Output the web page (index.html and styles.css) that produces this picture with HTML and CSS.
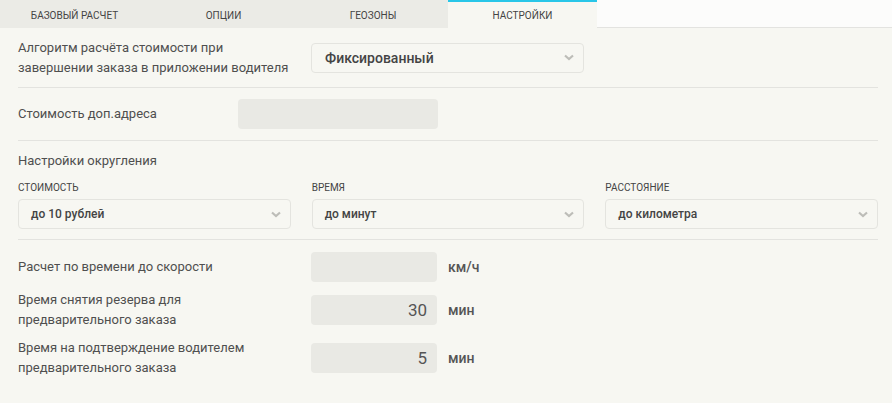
FILE: index.html
```html
<!DOCTYPE html>
<html lang="ru">
<head>
    <meta charset="UTF-8">
    <title>Настройки тарифа</title>
    <link rel="stylesheet" href="styles.css">
</head>
<body>
    <div class="tabs">
        <div class="tab">Базовый расчет</div>
        <div class="tab">Опции</div>
        <div class="tab">Геозоны</div>
        <div class="tab active">Настройки</div>
        <div class="tab-rest"></div>
    </div>

    <div class="content">
        <div class="row row-first">
            <label class="label label-wide">Алгоритм расчёта стоимости при<br>завершении заказа в приложении водителя</label>
            <div class="select select-main">
                <span>Фиксированный</span>
                <svg class="chevron" width="10" height="7" viewBox="0 0 10 7"><path d="M1 1.5 L5 5 L9 1.5" fill="none" stroke="#bdbdb8" stroke-width="2.2"/></svg>
            </div>
        </div>

        <div class="row row-second">
            <label class="label label-short">Стоимость доп.адреса</label>
            <div class="input input-addr"></div>
        </div>

        <div class="rounding">
            <div class="section-title">Настройки округления</div>
            <div class="rounding-grid">
                <div class="rounding-col">
                    <div class="small-label">Стоимость</div>
                    <div class="select">
                        <span>до 10 рублей</span>
                        <svg class="chevron" width="10" height="7" viewBox="0 0 10 7"><path d="M1 1.5 L5 5 L9 1.5" fill="none" stroke="#bdbdb8" stroke-width="2.2"/></svg>
                    </div>
                </div>
                <div class="rounding-col">
                    <div class="small-label">Время</div>
                    <div class="select">
                        <span>до минут</span>
                        <svg class="chevron" width="10" height="7" viewBox="0 0 10 7"><path d="M1 1.5 L5 5 L9 1.5" fill="none" stroke="#bdbdb8" stroke-width="2.2"/></svg>
                    </div>
                </div>
                <div class="rounding-col">
                    <div class="small-label">Расстояние</div>
                    <div class="select">
                        <span>до километра</span>
                        <svg class="chevron" width="10" height="7" viewBox="0 0 10 7"><path d="M1 1.5 L5 5 L9 1.5" fill="none" stroke="#bdbdb8" stroke-width="2.2"/></svg>
                    </div>
                </div>
            </div>
        </div>

        <div class="units">
            <div class="unit-row">
                <label class="label label-mid">Расчет по времени до скорости</label>
                <div class="input input-num"></div>
                <span class="unit">км/ч</span>
            </div>
            <div class="unit-row">
                <label class="label label-mid">Время снятия резерва для<br>предварительного заказа</label>
                <div class="input input-num">30</div>
                <span class="unit">мин</span>
            </div>
            <div class="unit-row">
                <label class="label label-mid">Время на подтверждение водителем<br>предварительного заказа</label>
                <div class="input input-num">5</div>
                <span class="unit">мин</span>
            </div>
        </div>
    </div>
</body>
</html>
```

FILE: styles.css
```css
* {
    margin: 0;
    padding: 0;
    box-sizing: border-box;
}

body {
    background-color: #f7f7f2;
    color: #4f4f4f;
    font-family: Roboto, 'Liberation Sans', sans-serif;
    font-size: 13px;
}

.tabs {
    display: flex;
    height: 28px;
}

.tab {
    width: 149px;
    background-color: #ebebe6;
    color: #444;
    font-size: 10px;
    text-transform: uppercase;
    text-align: center;
    line-height: 31px;
}

.tab:nth-child(3) {
    width: 150px;
}

.tab.active {
    background-color: #f7f7f2;
    border-top: 2px solid #29c6e8;
    line-height: 27px;
}

.tab-rest {
    flex: 1;
    background-color: #fcfcfb;
    border-bottom: 1px solid #e3e3e0;
}

.content {
    padding: 0 14px 0 18px;
}

.row {
    display: flex;
    align-items: center;
    border-bottom: 1px solid #e3e3df;
}

.row-first {
    height: 60px;
}

.row-second {
    height: 53px;
}

.label {
    line-height: 20px;
    color: #4f4f4f;
}

.label-wide {
    width: 293px;
}

.label-short {
    width: 220px;
}

.label-mid {
    width: 293px;
}

.select {
    display: flex;
    align-items: center;
    justify-content: space-between;
    height: 30px;
    border: 1px solid #e4e4df;
    border-radius: 4px;
    padding: 0 9px 0 12px;
    font-size: 12px;
    font-weight: 500;
    color: #444;
    background-color: #f7f7f2;
}

.select-main {
    width: 273px;
    font-size: 14px;
    padding-left: 13px;
}

.chevron {
    display: block;
}

.input {
    height: 30px;
    background-color: #e9e9e4;
    border-radius: 4px;
}

.input-addr {
    width: 200px;
}

.rounding {
    padding: 10px 0 10px;
    border-bottom: 1px solid #e3e3df;
}

.section-title {
    line-height: 20px;
    color: #4f4f4f;
}

.rounding-grid {
    display: grid;
    grid-template-columns: 1fr 1fr 1fr;
    gap: 21px;
    margin-top: 11px;
}

.small-label {
    font-size: 10px;
    text-transform: uppercase;
    color: #444;
    line-height: 12px;
    margin-bottom: 5px;
}

.units {
    padding-top: 12px;
}

.unit-row {
    display: flex;
    align-items: center;
    min-height: 30px;
    margin-bottom: 8px;
}

.input-num {
    width: 126px;
    font-size: 17px;
    color: #555;
    text-align: right;
    padding-right: 10px;
    line-height: 30px;
}

.unit {
    margin-left: 11px;
    font-size: 14px;
    font-weight: 500;
    color: #555;
}
```
